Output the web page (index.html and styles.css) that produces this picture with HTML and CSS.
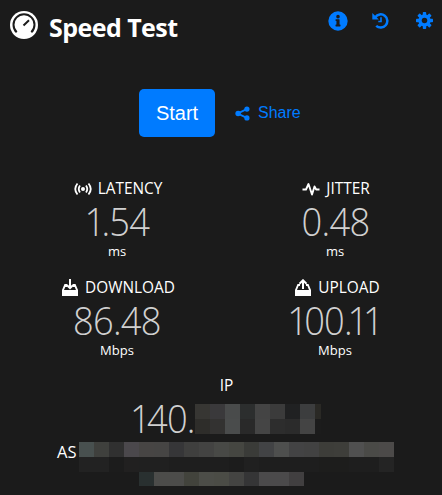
FILE: index.html
```html
<!DOCTYPE html>
<html lang="en">
<head>
<meta charset="utf-8">
<title>Speed Test</title>
<link rel="stylesheet" href="styles.css">
</head>
<body>
<main class="app">
  <header class="header">
    <svg class="logo" viewBox="0 0 28 28"><circle cx="14" cy="14" r="14" fill="#fff"/><path d="M6.700 21.300A10.500 10.500 0 1 1 21.300 21.300M13.500 14.500L19 9.300" fill="none" stroke="#1b1b1b" stroke-width="2"/></svg>
    <h1 class="title">Speed Test</h1>
    <nav class="tools">
      <svg class="info" viewBox="0 0 512 512"><path fill="currentColor" fill-rule="evenodd" d="M256 8a248 248 0 1 0 0 496 248 248 0 0 0 0-496zm0 90a46 46 0 1 1 0 92 46 46 0 0 1 0-92zm64 286c0 7-5 12-12 12H204c-7 0-12-5-12-12v-24c0-7 5-12 12-12h12v-92h-12c-7 0-12-5-12-12v-18c0-7 5-12 12-12h80c7 0 12 5 12 12v122h12c7 0 12 5 12 12z"/></svg>
      <svg class="history" viewBox="0 0 17 17"><path d="M3.300 5.200A6.600 6.600 0 1 1 4.200 13.800" fill="none" stroke="currentColor" stroke-width="2.500"/><path d="M.3 1v6.500h6.500z" fill="currentColor"/><path d="M9 5.300v4.200H6.300" fill="none" stroke="currentColor" stroke-width="1.600"/></svg>
      <svg class="gear" viewBox="-12 -12 24 24"><g fill="currentColor"><g id="teeth"><rect x="-2.400" y="-12" width="4.800" height="24" rx="1"/><rect x="-12" y="-2.400" width="24" height="4.800" rx="1"/></g><use href="#teeth" transform="rotate(45)"/><circle r="8.700"/></g><circle r="3.900" fill="#1b1b1b"/></svg>
    </nav>
  </header>
  <div class="actions">
    <button class="start">Start</button>
    <a class="share"><svg viewBox="0 0 16 16"><path d="M13 3L3 8l10 5" fill="none" stroke="currentColor" stroke-width="2"/><g fill="currentColor"><circle cx="12.700" cy="3.300" r="2.800"/><circle cx="3.300" cy="8" r="2.900"/><circle cx="12.700" cy="12.700" r="2.800"/></g></svg><span>Share</span></a>
  </div>
  <section class="metrics">
    <article class="metric">
      <h2 class="label"><svg viewBox="0 0 18 18"><circle cx="9" cy="9" r="2" fill="currentColor"/><path d="M6 5.500q-2.500 3.500 0 7M12 5.500q2.500 3.500 0 7M3.500 3.500q-4.500 5.500 0 11M14.500 3.500q4.500 5.500 0 11" fill="none" stroke="currentColor" stroke-width="1.800"/></svg><span>LATENCY</span></h2>
      <div class="value"><span class="one">1</span>.54</div><div class="unit">ms</div>
    </article>
    <article class="metric">
      <h2 class="label"><svg viewBox="0 0 18 18"><path d="M.5 9.500h3.500L6.500 4l3.500 10.500 2.500-8 1.700 3h3.300" fill="none" stroke="currentColor" stroke-width="1.900" stroke-linejoin="round"/></svg><span>JITTER</span></h2>
      <div class="value">0.48</div><div class="unit">ms</div>
    </article>
    <article class="metric">
      <h2 class="label"><svg viewBox="0 0 18 18"><path d="M3.500 5H6v3H4.300L3 11h12l-1.300-3H12V5h2.500l2.500 6v6H1v-6z" fill="currentColor"/><path d="M9 0v9M5.800 6L9 9.200 12.200 6" fill="none" stroke="currentColor" stroke-width="2"/></svg><span>DOWNLOAD</span></h2>
      <div class="value">86.48</div><div class="unit">Mbps</div>
    </article>
    <article class="metric">
      <h2 class="label upload"><svg viewBox="0 0 18 18"><path d="M3.500 5H6v2H4.600L3 11h12l-1.600-4H12V5h2.500l2.500 6v6H1v-6z" fill="currentColor"/><path d="M9 10V2M5.500 4.800L9 1.300l3.500 3.500" fill="none" stroke="currentColor" stroke-width="2"/></svg><span>UPLOAD</span></h2>
      <div class="value"><span class="one">1</span>00<span class="tight">.1</span>1</div><div class="unit">Mbps</div>
    </article>
  </section>
  <section class="network">
    <h2 class="label">IP</h2>
    <div class="ip"><span class="value address"><span class="one">1</span>40.</span><div class="mosaic" id="ip"></div></div>
    <div class="provider"><span class="as">AS</span><div class="mosaic" id="isp"></div></div>
    <div class="mosaic last" id="isp2"></div>
  </section>
</main>
<script src="mosaic.js"></script>
</body>
</html>
```
FILE: styles.css
```css
* { box-sizing: border-box; }
body { margin: 0; background: #1b1b1b; color: #fff; font-family: "Open Sans", "Noto Sans", sans-serif; overflow: hidden; }
.app { width: 436px; margin-left: 8px; height: 495px; overflow: hidden; }
.header { display: flex; height: 89px; padding: 11px 0 0 2px; align-items: flex-start; }
.logo { width: 28px; height: 28px; }
.title { margin: 0 0 0 11px; font-size: 25px; line-height: 32px; font-weight: 700; letter-spacing: -.55px; white-space: nowrap; width: 136px; }
.tools { display: flex; margin-left: auto; padding-right: 11px; color: #007bff; }
.info { width: 20px; height: 20px; margin-right: 24px; }
.history { width: 17px; height: 17px; margin: 1px 27px 0 0; }
.gear { width: 17px; height: 17px; margin-top: 1px; }
.actions { display: flex; height: 85px; padding-left: 131px; align-items: flex-start; font-family: "Liberation Sans", sans-serif; }
.start { width: 76px; height: 48px; padding: 0; border: 0; border-radius: 5px; background: #007bff; color: #fff; font: 20px "Liberation Sans", sans-serif; }
.share { display: flex; align-items: center; height: 48px; margin-left: 20px; gap: 8px; color: #007bff; font-size: 16px; }
.share svg { width: 15px; height: 15px; }
.metrics { display: grid; grid-template-columns: 1fr 1fr; grid-auto-rows: 98.5px; height: 199px; }
.metric { display: flex; flex-direction: column; align-items: center; padding-top: 4px; }
.label { display: flex; align-items: center; justify-content: center; gap: 6px; margin: 0; height: 22px; font-size: 15.4px; font-weight: 400; line-height: 22px; }
.metric .label { padding-left: 2px; }
.metric .label.upload { padding-left: 4px; }
.label svg { width: 18px; height: 18px; }
.value { height: 42px; line-height: 42px; font-size: 38px; font-weight: 300; color: #d0d0d0; letter-spacing: -.8px; transform: scaleX(.955); }
.one { letter-spacing: -4px; }
.tight { letter-spacing: -5.5px; }
.value.address { transform-origin: right; }
.unit { height: 18px; line-height: 18px; font-size: 13px; }
.network { padding-top: 2px; }
.network .label { padding-left: 1px; }
.ip { display: flex; justify-content: flex-end; width: 313px; height: 45px; }
.ip .mosaic { margin-top: 7px; }
.ip .tile:last-child { width: 6px; }
.provider { display: flex; justify-content: center; height: 30px; }
.as { width: 22px; margin-left: -1px; font-size: 16.500px; line-height: 20px; }
.mosaic { display: flex; flex-direction: column; }
.last { align-items: center; margin-right: 9px; }
.last .tile { height: 14px; }
.tiles { display: flex; }
.tile { width: 15px; height: 15px; }
```
FILE: mosaic.js
```js
const mosaics = {
  ip: ["373633 3a393b 494b4b 2c2e2e 444444 3b3b3b 202122 3c3d3e 2a2925", "2e2d2a 333231 4a4c4c 292929 454545 2d2d2d 2b2b2b 444444 1c1c1c"],
  isp: [
    "48504f 3f403d 303030 4b484c 474544 464544 363638 3f3f3e 434342 484946 454641 3a3b38 424345 4e4f4e 434344 424242 3d3d39 3e3e3a 505050 4a4a47 4c4a49",
    "222222 222222 1c1c1c 212020 202020 202020 1e1e1e 1e1e1e 1e1e1e 1e1e1e 1c1c1c 202020 1e1e1e 1e1e1e 1e1e1e 1e1e1e 1d1d1c 1d1d1c 1e1e1e 1e1e1e 242424"
  ],
  isp2: ["293030 4c4c4a 4c4c4a 42433c 4c4d48 4b4c46 444442 353536 4b4a4b 4b4a4b 413f40"]
};
for (const [id, rows] of Object.entries(mosaics)) {
  for (const row of rows) {
    const line = document.createElement("div");
    line.className = "tiles";
    for (const color of row.split(" ")) {
      const tile = document.createElement("div");
      tile.className = "tile";
      tile.style.background = "#" + color;
      line.append(tile);
    }
    document.getElementById(id).append(line);
  }
}
```
